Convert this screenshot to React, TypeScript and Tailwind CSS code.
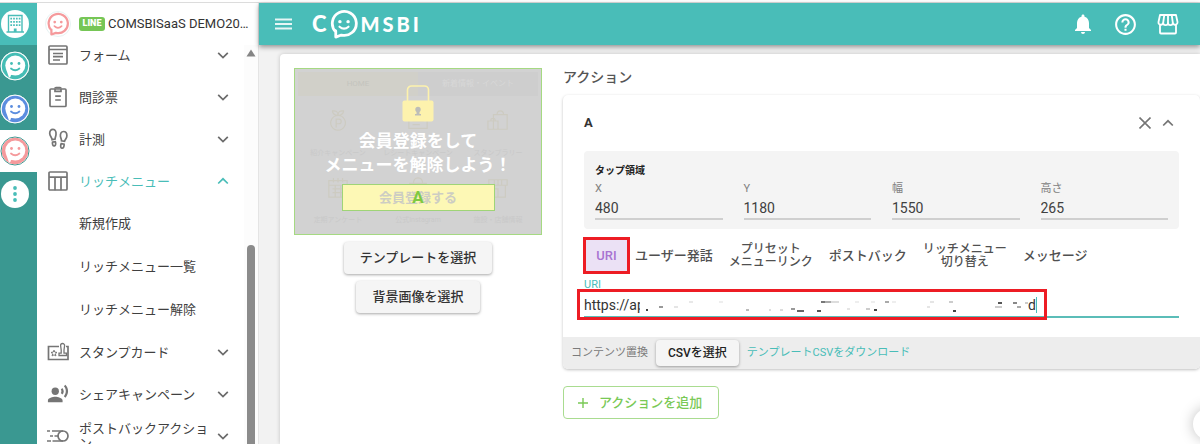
import type { ReactNode } from 'react';
import clsx from 'clsx';
import { MdNotifications, MdHelpOutline, MdRecordVoiceOver } from 'react-icons/md';

type FaceProps = { color: string; ring?: string };

/* Speech bubble face on a coloured disc */
function FaceDisc({ color, ring = '#ffffff' }: FaceProps) {
  return (
    <svg viewBox="0 0 30 30" className="h-[30px] w-[30px] shrink-0" aria-hidden="true">
      <circle cx="15" cy="15" r="14" fill="#fff" stroke={ring} strokeWidth="1" />
      <circle cx="15" cy="15" r="13.2" fill={color} />
      <circle cx="15.3" cy="14.5" r="10" fill="#fff" />
      <path d="M6 18 L9 26.500 Q10.500 27 11 24 L14 23Z" fill="#fff" />
      <circle cx="11.5" cy="12.5" r="1.4" fill={color} />
      <circle cx="19" cy="12.5" r="1.4" fill={color} />
      <path d="M11 17.5 Q15.2 21 19.4 17.5" fill="none" stroke={color} strokeWidth="1.8" strokeLinecap="round" />
    </svg>
  );
}

/* Outlined speech bubble face */
function FaceBubble({ color, className }: { color: string; className: string }) {
  return (
    <svg viewBox="0 0 28 28" className={className} aria-hidden="true">
      <path
        d="M6.3 20.5 L6.3 26.2 L11.5 24.3 A11.2 11.2 0 1 0 6.3 21.3 Z"
        fill="none"
        stroke={color}
        strokeWidth="2.6"
        strokeLinejoin="round"
      />
      <circle cx="10.2" cy="11.8" r="1.6" fill={color} />
      <circle cx="17.8" cy="11.8" r="1.6" fill={color} />
      <path d="M9.8 16.5 Q14 20.3 18.2 16.5" fill="none" stroke={color} strokeWidth="2" strokeLinecap="round" />
    </svg>
  );
}

function Chevron({ up = false, className }: { up?: boolean; className?: string }) {
  return (
    <svg viewBox="0 0 12 12" className={clsx('h-3 w-3 shrink-0', className)} fill="none" stroke="currentColor" strokeWidth="1.7" aria-hidden="true">
      <path d={up ? 'M1.2 8.5 L6 3.8 L10.8 8.5' : 'M1.2 3.8 L6 8.5 L10.8 3.8'} />
    </svg>
  );
}

function LineIcon({ children }: { children: ReactNode }) {
  return (
    <svg viewBox="0 0 22 22" className="h-[22px] w-[22px]" fill="none" stroke="currentColor" strokeWidth="1.7" aria-hidden="true">
      {children}
    </svg>
  );
}

const formIcon = (
  <LineIcon>
    <rect x="2" y="2" width="18" height="18" rx="1" />
    <path d="M2 5.5h18M6 9.5h10M6 12.7h10M6 16h7" />
  </LineIcon>
);

const clipboardIcon = (
  <LineIcon>
    <rect x="3" y="3" width="16" height="17.5" rx="1" />
    <path d="M8 3v2.4h6V3M8.2 10.2h5.6M8.2 14h5.6" />
    <path d="M8 2.6Q8 1.6 9 1.6h4q1 0 1 1" />
  </LineIcon>
);

const stepsIcon = (
  <LineIcon>
    <path d="M6 1.300c2.600 0 3.200 2.800 3 5.200-.2 2-.8 2.700-.9 4.500l-3 .6C5 9.600 2.700 8 2.700 5.200 2.700 3 3.800 1.300 6 1.300z" />
    <path d="M5.500 14.200l2.800-.5c.6 1.300.6 3.800-.8 4.100-1.700.4-2.300-1.900-2-3.600z" />
    <path d="M16.500 3.500c2.400 0 3.400 2 3.400 4.200 0 2.600-1.800 3.700-2.400 5.700l-3-.5c0-1.800-.9-2.900-1.100-4.700-.2-2.500.8-4.700 3.100-4.700z" />
    <path d="M14.200 15.700l2.900.5c.2 1.900-.6 4.300-2.300 4-1.500-.3-1.300-2.900-.6-4.500z" />
  </LineIcon>
);

const tableIcon = (
  <LineIcon>
    <rect x="2" y="2" width="18" height="18" rx="1" />
    <path d="M2 7.200h18M8 7.200v13M14 7.200v13" />
  </LineIcon>
);

const stampIcon = (
  <LineIcon>
    <path d="M12 5.500H1.500v13h19.500v-13h-2" />
    <path d="M7 9.200l.9 2 2.100.2-1.600 1.400.5 2.100L7 13.800l-1.900 1.100.5-2.100L4 11.400l2.100-.2z" strokeWidth="1" />
    <path d="M12 14.500h7.500v-2.300H17V9l.6-4.500a2 2 0 0 0-4 0L14.200 9v3.200H12z" strokeWidth="1.300" />
  </LineIcon>
);

const postbackIcon = (
  <LineIcon>
    <circle cx="16" cy="11" r="5" />
    <path d="M5 6h11M0 6h3M3 11h3M7.500 11h4M0 16h4M5.500 16h10.500" />
  </LineIcon>
);

type MenuItem = { label: string; icon?: ReactNode; open?: boolean; sub?: boolean };

const menu: MenuItem[] = [
  { label: 'フォーム', icon: formIcon },
  { label: '問診票', icon: clipboardIcon },
  { label: '計測', icon: stepsIcon },
  { label: 'リッチメニュー', icon: tableIcon, open: true },
  { label: '新規作成', sub: true },
  { label: 'リッチメニュー一覧', sub: true },
  { label: 'リッチメニュー解除', sub: true },
  { label: 'スタンプカード', icon: stampIcon },
  { label: 'シェアキャンペーン', icon: <MdRecordVoiceOver className="h-[22px] w-[22px]" /> },
  { label: 'ポストバックアクション', icon: postbackIcon },
];

function Rail() {
  return (
    <aside className="flex w-[37px] shrink-0 flex-col bg-[#3a9891]">
      <button aria-label="組織" className="flex h-[42px] items-center bg-[#49bdb8]">
        <svg viewBox="0 0 30 30" className="h-[30px] w-[30px]" aria-hidden="true">
          <circle cx="15" cy="15" r="14" fill="#fff" />
          <path d="M8.500 6.500h13.500v16.500H8.500zM6.500 23h17.500" fill="none" stroke="#49bdb8" strokeWidth="1.400" />
          <path d="M11.200 8.800v9M14 8.800v9M16.800 8.800v9M19.600 8.800v9" stroke="#49bdb8" strokeWidth="1.700" strokeDasharray="1.800 1.400" />
          <path d="M13.800 19.500h2.800v3.500h-2.800z" fill="#49bdb8" />
        </svg>
      </button>
      <button aria-label="アカウント1" className="flex h-[42px] items-center">
        <FaceDisc color="#45bdb5" />
      </button>
      <button aria-label="アカウント2" className="flex h-[43px] items-center">
        <FaceDisc color="#5b8ddf" />
      </button>
      <button aria-label="アカウント3" className="flex h-[42px] items-center bg-white">
        <FaceDisc color="#f59a9c" ring="#3a9891" />
      </button>
      <button aria-label="その他" className="flex h-[43px] items-center">
        <svg viewBox="0 0 30 30" className="h-[30px] w-[30px]" fill="#49bdb8" aria-hidden="true">
          <circle cx="15" cy="15" r="14" fill="#fff" />
          <circle cx="15" cy="9" r="1.900" />
          <circle cx="15" cy="15" r="1.900" />
          <circle cx="15" cy="21" r="1.900" />
        </svg>
      </button>
    </aside>
  );
}

function Sidebar() {
  return (
    <aside className="flex w-[222px] shrink-0 flex-col border-r border-[#e4e4e4] bg-white">
      <div className="z-10 flex h-[42px] shrink-0 items-center pl-2">
        <div className="flex h-[26px] w-[26px] shrink-0 items-center justify-center rounded-full border border-[#e6f3f3]">
          <FaceBubble color="#f59a9c" className="h-6 w-6" />
        </div>
        <span className="ml-2 flex h-[14px] w-[26px] shrink-0 items-center justify-center rounded-[3px] bg-[#76c656] text-[9px] font-black text-white">
          LINE
        </span>
        <span className="ml-[3px] truncate pr-1 text-[13px] text-[#333]">COMSBISaaS DEMO2024</span>
      </div>
      <div className="flex min-h-0 flex-1">
        {/* list is scrolled a little past its first row */}
        <nav className="-mt-[11px] min-w-0 flex-1">
          {menu.map((item) => (
            <button
              key={item.label}
              className={clsx(
                'flex w-full items-center pl-[10px] text-left text-[13px] leading-[15px]',
                item.sub ? 'h-[43px]' : 'h-[42px]',
                item.open ? 'text-[#49bdb8]' : 'text-[#404040]',
              )}
            >
              <span className="w-8 shrink-0 text-[#757575]">{item.icon}</span>
              <span className="w-[138px] shrink-0 pr-1">{item.label}</span>
              {!item.sub && <Chevron up={item.open} className={item.open ? '' : 'text-[#6b6b6b]'} />}
            </button>
          ))}
        </nav>
        <div className="flex w-[14px] shrink-0 flex-col items-center bg-[#fcfcfc] pt-1">
          <svg viewBox="0 0 10 8" className="h-2 w-[10px]" aria-hidden="true">
            <path d="M5 0.500 9.500 7.500H0.500z" fill="#858585" />
          </svg>
          <div className="mt-[188px] w-2 flex-1 rounded-t-full bg-[#8b8b8b]" />
        </div>
      </div>
    </aside>
  );
}

function Header() {
  return (
    <header className="z-10 flex h-[42px] shrink-0 items-center bg-[#49bdb8] pr-5 pl-4 text-white shadow-[0_2px_5px_rgba(0,0,0,0.4)]">
      <button aria-label="メニュー">
        <svg viewBox="0 0 17 12" className="h-3 w-[17px]" stroke="#e6f6f5" strokeWidth="1.800" aria-hidden="true">
          <path d="M0 1.500h17M0 6h17M0 10.500h17" />
        </svg>
      </button>
      <a href="#" className="ml-5 flex items-center font-[Lato] text-[22px] leading-none font-black">
        <span>C</span>
        <FaceBubble color="#fff" className="mr-[2px] ml-[2px] h-[30px] w-[30px]" />
        <span className="flex gap-[3px] text-[20px]">
          <span>M</span>
          <span>S</span>
          <span>B</span>
          <span>I</span>
        </span>
      </a>
      <div className="ml-auto flex items-center gap-[18px]">
        <button aria-label="お知らせ">
          <MdNotifications className="h-6 w-6" />
        </button>
        <button aria-label="ヘルプ">
          <MdHelpOutline className="h-[25px] w-[25px]" />
        </button>
        <button aria-label="ストア">
          <svg viewBox="0 0 24 24" className="h-6 w-6" fill="none" stroke="currentColor" strokeWidth="1.800" strokeLinejoin="round" aria-hidden="true">
            <path d="M4 3h16l1.500 7a2.300 2.300 0 0 1-4.700 0.700 2.400 2.400 0 0 1-4.800 0 2.400 2.400 0 0 1-4.800 0A2.300 2.300 0 0 1 2.500 10z" />
            <path d="M8.300 3l-1.100 7.700M12 3v7.700M15.700 3l1.100 7.700M4 13v7.500q0 1 1 1h14q1 0 1-1V13" />
          </svg>
        </button>
      </div>
    </header>
  );
}

const tiles = [
  { label: '紹介キャンペーン', d: 'M12 6a8 8 0 1 0 .1 0M12 6Q6 5 6 1Q12 0 12 6Q12 0 18 1Q18 5 12 6M10 19v-9h3a2.500 2.500 0 0 1 0 5h-3' },
  { label: 'レシートキャンペーン', d: 'M2 2h20v18H2zM6 8h12M6 12h12M6 16h8' },
  { label: 'スタンプラリー', d: 'M7 5h15v16H7zM11 5q0-4 3.500-4T18 5M1 12h11v9H1zM4 12q0-3 2.500-3T9 12' },
  { label: '定期アンケート', d: 'M2 4h20v18H2zM2 9h20M7 1v5M12 1v5M17 1v5M6 13h12M6 17h12M9 9v13M15 9v13' },
  { label: '公式Instagram', d: 'M3 7h18v14H3zM7 7q0-6 5-6t5 6' },
  { label: '施設・店舗情報', d: 'M2 3h20v6H2zM4 9v13h16V9M8 3v6M12 3v6M16 3v6M8 13h4v9' },
];

function MenuPreview() {
  return (
    <div className="grid h-[167px] w-full border border-[#a5d982] bg-[#d2d2d2]">
      <div className="flex flex-col p-[3px] text-[#c9c9c9] [grid-area:1/1]" aria-hidden="true">
        <div className="grid h-6 grid-cols-2 items-center text-center text-[8px]">
          <span className="bg-[#d1d0c9] leading-6 text-[#c4c4be]">HOME</span>
          <span className="bg-[#cecece] leading-6 text-[#d8d8d8]">新着情報・イベント</span>
        </div>
        <div className="grid flex-1 grid-cols-3 text-center text-[7px]">
          {tiles.map((tile) => (
            <div key={tile.label} className="flex flex-col items-center justify-end pb-[6px]">
              <svg viewBox="0 0 24 24" className="h-[22px] w-[22px]" fill="none" stroke="#cdcbc1" strokeWidth="1.300">
                <path d={tile.d} />
              </svg>
              <span className="mt-4 leading-[10px] whitespace-nowrap">{tile.label}</span>
            </div>
          ))}
        </div>
      </div>
      <div className="z-0 flex flex-col items-center pt-4 [grid-area:1/1]">
        <svg viewBox="0 0 32 37" className="h-[37px] w-8" aria-hidden="true">
          <path d="M5.500 16V5a4 4 0 0 1 4-4h13a4 4 0 0 1 4 4v11" fill="none" stroke="#fdf2ad" strokeWidth="1.600" />
          <rect x="0.500" y="15.500" width="31" height="21" rx="2" fill="#fdf2ad" />
          <circle cx="16" cy="24.500" r="2.700" fill="#bdbdb8" />
          <path d="M14.500 25h3v4h1.500v1.500h-6V29h1.500z" fill="#bdbdb8" />
        </svg>
        <p className="mt-[7px] text-center text-[17px] leading-6 font-bold whitespace-nowrap text-white">
          会員登録をして
          <br />
          メニューを解除しよう！
        </p>
        <div className="mt-[7px] grid h-[27px] w-[153px] place-items-center border border-[#9fd477] bg-[#fdf8b5]">
          <span className="text-[13px] font-bold text-[#cdcdc3] [grid-area:1/1]">会員登録する</span>
          <span className="text-[17px] leading-none font-bold text-[#7fca3f] [grid-area:1/1]">A</span>
        </div>
      </div>
    </div>
  );
}

const area = [
  { id: 'x', label: 'X', value: '480' },
  { id: 'y', label: 'Y', value: '1180' },
  { id: 'width', label: '幅', value: '1550' },
  { id: 'height', label: '高さ', value: '265' },
];

const tabs = [
  { lines: ['ユーザー発話'] },
  { lines: ['プリセット', 'メニューリンク'] },
  { lines: ['ポストバック'] },
  { lines: ['リッチメニュー', '切り替え'] },
  { lines: ['メッセージ'] },
];

/* x, y, width, grey level of what is left of the masked URI */
const maskBits: [number, number, number, string][] = [
  [6, 12, 2, '#444'], [19, 9, 4, '#999'], [34, 9, 4, '#e5e5e5'], [49, 4, 4, '#e8e8e8'],
  [79, 4, 4, '#eee'], [106, 12, 3, '#bbb'], [129, 12, 2, '#ddd'], [140, 12, 3, '#ddd'],
  [151, 11, 4, '#999'], [157, 13, 7, '#666'], [177, 13, 4, '#555'], [181, 4, 4, '#777'],
  [185, 4, 6, '#aaa'], [191, 4, 8, '#ddd'], [207, 11, 3, '#e5e5e5'], [215, 4, 4, '#eee'],
  [226, 11, 4, '#ccc'], [234, 12, 3, '#444'], [231, 4, 4, '#eee'], [245, 4, 4, '#aaa'],
  [252, 4, 4, '#eee'], [290, 4, 4, '#e5e5e5'], [287, 9, 3, '#e5e5e5'], [309, 4, 4, '#ccc'],
  [313, 13, 3, '#444'], [355, 9, 7, '#ccc'], [358, 5, 4, '#555'], [373, 5, 4, '#888'],
  [377, 9, 4, '#aaa'], [385, 5, 3, '#ccc'],
];

function ActionCard() {
  return (
    <section className="mt-2 overflow-hidden rounded-[5px] bg-white shadow-[0_1px_3px_rgba(0,0,0,0.25)]">
      <div className="flex h-14 items-center pr-[26px] pl-[21px] text-[#757575]">
        <h3 className="mr-auto text-[13px] font-bold text-[#333]">A</h3>
        <button aria-label="削除" className="mr-[11px]">
          <svg viewBox="0 0 12 12" className="h-3 w-3" stroke="currentColor" strokeWidth="1.600" aria-hidden="true">
            <path d="M0.500 0.500l11 11M11.500 0.500l-11 11" />
          </svg>
        </button>
        <button aria-label="閉じる">
          <Chevron up />
        </button>
      </div>

      <div className="px-[21px]">
        <div className="rounded bg-[#f4f4f4] px-[11px] pt-3 pb-[9px]">
          <h4 className="text-[10px] leading-4 font-bold text-[#222]">タップ領域</h4>
          <div className="mt-[2px] grid grid-cols-4 gap-[21px]">
            {area.map((field) => (
              <div key={field.id} className="flex flex-col">
                <label htmlFor={field.id} className="text-[11px] leading-4 text-[#808080]">
                  {field.label}
                </label>
                <input
                  id={field.id}
                  defaultValue={field.value}
                  className="h-[23px] w-full border-b-2 border-[#cfcfcf] bg-transparent text-sm text-[#404040] outline-none"
                />
              </div>
            ))}
          </div>
        </div>

        <div className="-ml-px mt-2 flex items-center gap-4 text-[#505050]">
          <button className="-mr-[11px] h-[37px] w-[47px] border-[3px] border-[#ed1c24] bg-[#ebe1f5] text-[13px] font-medium text-[#a873d1]">
            URI
          </button>
          {tabs.map((tab) => (
            <button
              key={tab.lines[0]}
              className={clsx(
                'leading-[13px] font-medium whitespace-nowrap',
                tab.lines.length > 1 ? 'text-[12px]' : 'text-[13px]',
              )}
            >
              {tab.lines.map((line) => (
                <span key={line} className="block">
                  {line}
                </span>
              ))}
            </button>
          ))}
        </div>

        <div className="relative pt-[3px]">
          <label htmlFor="uri" className="block h-4 text-[11px] leading-4 text-[#49bdb8]">
            URI
          </label>
          <div className="flex h-[25px] items-center border-b-2 border-[#5bbdb8] text-sm text-[#333]">
            <input id="uri" defaultValue="https://ap" className="w-14 outline-none" />
            <svg viewBox="0 0 388 16" className="h-4 w-[388px] shrink-0" aria-hidden="true">
              {maskBits.map(([x, y, w, fill]) => (
                <rect key={`${x}-${y}`} x={x} y={y} width={w} height="2" fill={fill} />
              ))}
            </svg>
            <span>d</span>
            <span className="h-4 w-px bg-[#49bdb8]" />
          </div>
          {/* highlight frame */}
          <div className="absolute top-[15px] -left-[7px] h-[31px] w-[470px] border-[3px] border-[#ed1c24]" />
        </div>
      </div>

      <div className="mt-[19px] flex h-8 items-center bg-[#ededed] pl-2 text-[11px]">
        <span className="text-[#7b7b7b]">コンテンツ置換</span>
        <button className="mx-2 h-[26px] rounded bg-[#f5f5f5] px-3 text-[12px] font-medium text-[#222] shadow-[0_1px_3px_rgba(0,0,0,0.35)]">
          CSVを選択
        </button>
        <a href="#" className="text-[#49bdb8]">
          テンプレートCSVをダウンロード
        </a>
      </div>
    </section>
  );
}

export default function App() {
  return (
    <div className="flex h-screen flex-col overflow-hidden bg-white font-[Roboto,'Noto_Sans_CJK_JP',sans-serif]">
      <div className="h-[3px] shrink-0 border-b border-[#dcdcdc]" />
      <div className="flex min-h-0 flex-1">
        <Rail />
        <Sidebar />
        <div className="flex min-w-0 flex-1 flex-col">
          <Header />
          <main className="flex min-h-0 flex-1 bg-[#f2f2f2] pt-[9px] pl-[21px]">
            <div className="flex flex-1 gap-[21px] rounded-tl bg-white pt-[14px] pl-[14px] shadow-[0_0_4px_rgba(0,0,0,0.2)]">
              <div className="flex w-[248px] shrink-0 flex-col items-center gap-[7px]">
                <MenuPreview />
                <button className="h-8 rounded bg-[#f5f5f5] px-4 text-[13px] font-medium text-[#333] shadow-[0_1px_3px_rgba(0,0,0,0.35)]">
                  テンプレートを選択
                </button>
                <button className="h-8 rounded bg-[#f5f5f5] px-4 text-[13px] font-medium text-[#333] shadow-[0_1px_3px_rgba(0,0,0,0.35)]">
                  背景画像を選択
                </button>
              </div>
              <div className="min-w-0 flex-1">
                <h2 className="text-sm leading-[19px] font-medium text-[#555]">アクション</h2>
                <ActionCard />
                <button className="mt-[17px] flex h-[33px] items-center rounded border border-[#a9dc90] pr-4 pl-[14px] text-[13px] font-medium text-[#79c956]">
                  <svg viewBox="0 0 10 10" className="mr-[11px] h-[10px] w-[10px]" stroke="currentColor" strokeWidth="1.400" aria-hidden="true">
                    <path d="M5 0v10M0 5h10" />
                  </svg>
                  アクションを追加
                </button>
              </div>
            </div>
          </main>
        </div>
      </div>
      <button aria-label="チャット" className="fixed -right-[25px] bottom-1 h-8 w-8 rounded-full bg-white shadow-[0_0_14px_rgba(0,0,0,0.25)]" />
    </div>
  );
}
